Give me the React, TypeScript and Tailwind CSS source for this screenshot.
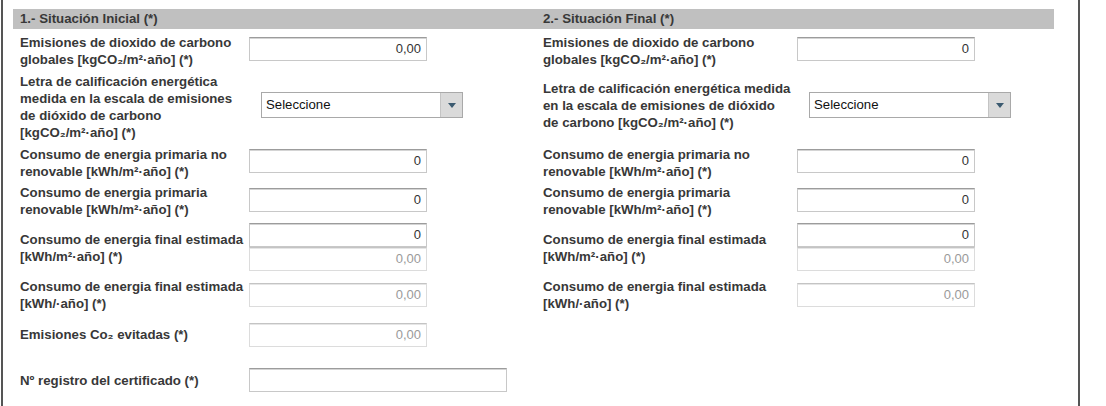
import React from "react";

type Field = {
  lines: string[];
  value?: string;
  second?: string;
  kind?: "input" | "disabled" | "select" | "double" | "wide";
  rowH: number;
  labelTop: number;
  fieldTop: number;
};

const leftRows: Field[] = [
  {
    lines: ["Emisiones de dioxido de carbono", "globales [kgCO₂/m²·año] (*)"],
    value: "0,00",
    kind: "input",
    rowH: 39,
    labelTop: 0,
    fieldTop: 3,
  },
  {
    lines: [
      "Letra de calificación energética",
      "medida en la escala de emisiones",
      "de dióxido de carbono",
      "[kgCO₂/m²·año] (*)",
    ],
    kind: "select",
    rowH: 73,
    labelTop: 0,
    fieldTop: 19,
  },
  {
    lines: ["Consumo de energia primaria no", "renovable [kWh/m²·año] (*)"],
    value: "0",
    kind: "input",
    rowH: 38,
    labelTop: 0,
    fieldTop: 3,
  },
  {
    lines: ["Consumo de energia primaria", "renovable [kWh/m²·año] (*)"],
    value: "0",
    kind: "input",
    rowH: 39,
    labelTop: 0,
    fieldTop: 4,
  },
  {
    lines: ["Consumo de energia final estimada", "[kWh/m²·año] (*)"],
    value: "0",
    second: "0,00",
    kind: "double",
    rowH: 55,
    labelTop: 8,
    fieldTop: 0,
  },
  {
    lines: ["Consumo de energia final estimada", "[kWh/·año] (*)"],
    value: "0,00",
    kind: "disabled",
    rowH: 45,
    labelTop: 0,
    fieldTop: 5,
  },
  {
    lines: ["Emisiones Co₂ evitadas (*)"],
    value: "0,00",
    kind: "disabled",
    rowH: 45,
    labelTop: 3,
    fieldTop: 0,
  },
  {
    lines: ["Nº registro del certificado (*)"],
    value: "",
    kind: "wide",
    rowH: 30,
    labelTop: 4,
    fieldTop: 0,
  },
];

const rightRows: Field[] = [
  { ...leftRows[0], value: "0" },
  {
    ...leftRows[1],
    lines: [
      "Letra de calificación energética medida",
      "en la escala de emisiones de dióxido",
      "de carbono [kgCO₂/m²·año] (*)",
    ],
    labelTop: 7,
  },
  leftRows[2],
  leftRows[3],
  leftRows[4],
  leftRows[5],
];

const inputBase =
  "h-[24px] bg-white border border-[#c8c8c8] border-t-[#9c9c9c] shadow-[inset_0_1px_0_#d4d4d4] text-right pr-[5px] text-[13px] leading-[22px] font-normal";

function Box({ value, disabled, wide }: { value: string; disabled?: boolean; wide?: boolean }) {
  return (
    <div
      className={`${inputBase} ${wide ? "w-[258px]" : "w-[178px]"} ${
        disabled
          ? "border-[#dcdcdc] border-t-[#c4c4c4] shadow-[inset_0_1px_0_#e6e6e6] text-[#9a9a9a]"
          : "text-[#333]"
      }`}
    >
      {value}
    </div>
  );
}

function Select() {
  return (
    <div className="ml-[12px] w-[202px] h-[26px] flex border border-[#a9a9a9] bg-white">
      <div className="flex-1 pl-[4px] text-[13.2px] leading-[24px] text-[#111] font-normal">
        Seleccione
      </div>
      <div className="w-[22px] bg-[#dadada] border-l border-[#c4c4c4] flex items-center justify-center">
        <svg width="8" height="5" viewBox="0 0 8 5">
          <path d="M0 0h8L4 5z" fill="#3b5a70" />
        </svg>
      </div>
    </div>
  );
}

function Row({ f, labelW }: { f: Field; labelW: string }) {
  return (
    <div className="flex items-start" style={{ height: f.rowH }}>
      <div className={`${labelW} shrink-0`} style={{ marginTop: f.labelTop }}>
        {f.lines.map((l) => (
          <div key={l} className="whitespace-nowrap leading-[17px]">
            {l}
          </div>
        ))}
      </div>
      <div style={{ marginTop: f.fieldTop }}>
        {f.kind === "select" && <Select />}
        {f.kind === "input" && <Box value={f.value ?? ""} />}
        {f.kind === "disabled" && <Box value={f.value ?? ""} disabled />}
        {f.kind === "wide" && <Box value="" wide />}
        {f.kind === "double" && (
          <div className="flex flex-col">
            <Box value={f.value ?? ""} />
            <Box value={f.second ?? ""} disabled />
          </div>
        )}
      </div>
    </div>
  );
}

export default function App() {
  return (
    <div className="w-[1106px] h-[406px] bg-white overflow-hidden font-['Liberation_Sans',Arial,sans-serif] text-[13.25px] font-bold text-[#383838]">
      <div className="ml-[1px] w-[1079px] h-full border-l-2 border-r-2 border-[#555] pl-[10px] pr-[24px] pt-[9px]">
        <div className="h-[20px] bg-[#c0c0c0] flex items-center leading-[20px]">
          <div className="w-[530px] pl-[7px]">1.- Situación Inicial (*)</div>
          <div>2.- Situación Final (*)</div>
        </div>
        <div className="flex pt-[5px]">
          <div className="w-[530px] pl-[7px] flex flex-col">
            {leftRows.map((f, i) => (
              <Row key={i} f={f} labelW="w-[229px]" />
            ))}
          </div>
          <div className="flex-1 flex flex-col">
            {rightRows.map((f, i) => (
              <Row key={i} f={f} labelW="w-[254px]" />
            ))}
          </div>
        </div>
      </div>
    </div>
  );
}
